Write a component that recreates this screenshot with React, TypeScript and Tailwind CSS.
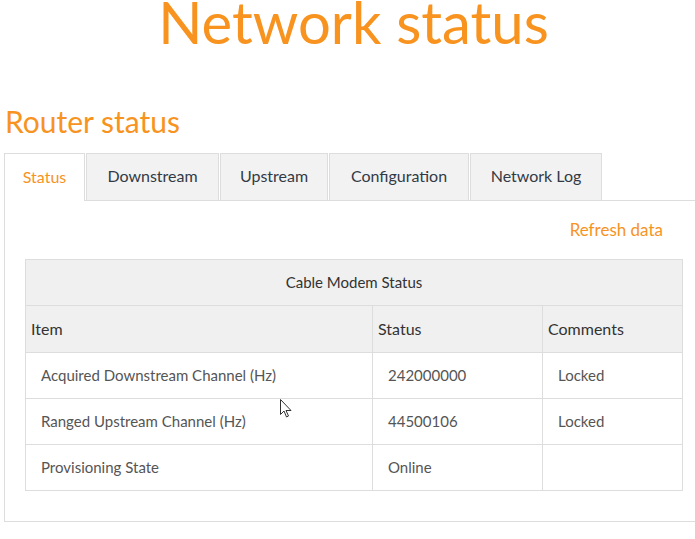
const tabs = [
  { label: "Status", w: "w-[81px]" },
  { label: "Downstream", w: "w-[133px]" },
  { label: "Upstream", w: "w-[108px]" },
  { label: "Configuration", w: "w-[140px]" },
  { label: "Network Log", w: "w-[132px]" },
];

const rows = [
  { item: "Acquired Downstream Channel (Hz)", status: "242000000", comment: "Locked" },
  { item: "Ranged Upstream Channel (Hz)", status: "44500106", comment: "Locked" },
  { item: "Provisioning State", status: "Online", comment: "" },
];

export default function App() {
  return (
    <div className="relative h-[539px] w-[695px] overflow-hidden bg-white font-['Lato',sans-serif]">
      <h1 className="pl-3 text-center text-[58px] leading-[0.75] text-[#f7931e]">Network status</h1>

      <div className="px-1">
        <h2 className="mt-[59px] pl-px text-[30px] leading-[1.2] text-[#f7931e]">Router status</h2>

        <div className="mt-[14px] w-[700px]">
          <ul className="flex">
            {tabs.map((tab, i) => (
              <li
                key={tab.label}
                className={
                  i === 0
                    ? `-mb-px mr-px flex h-[48px] ${tab.w} items-center justify-center border border-b-0 border-[#dddddd] bg-white pb-px text-[16px] text-[#f7931e]`
                    : `mr-px flex h-[47px] ${tab.w} items-center justify-center border border-b-0 border-[#dddddd] bg-[#f2f2f2] pb-px text-[16px] text-[#333a45]`
                }
              >
                {tab.label}
              </li>
            ))}
          </ul>

          <div className="border border-[#dddddd] px-5 pb-[30px]">
            <div className="flex h-[58px] items-center justify-end pr-5">
              <a href="#" className="text-[17px] text-[#f7931e]">
                Refresh data
              </a>
            </div>

            <table className="w-full border-collapse text-[15px]">
              <thead>
                <tr className="h-[46px] bg-[#f0f0f0]">
                  <th colSpan={3} className="border border-[#dddddd] font-normal text-[#333333]">
                    Cable Modem Status
                  </th>
                </tr>
                <tr className="h-[47px] bg-[#f0f0f0] text-left text-[16px]">
                  <th className="w-[347px] border border-[#dddddd] px-[5px] font-normal text-[#333333]">Item</th>
                  <th className="w-[170px] border border-[#dddddd] px-[5px] font-normal text-[#333333]">Status</th>
                  <th className="border border-[#dddddd] px-[5px] font-normal text-[#333333]">Comments</th>
                </tr>
              </thead>
              <tbody>
                {rows.map((r) => (
                  <tr key={r.item} className="h-[46px] text-[#555555]">
                    <td className="border border-[#dddddd] px-[15px]">{r.item}</td>
                    <td className="border border-[#dddddd] px-[15px]">{r.status}</td>
                    <td className="border border-[#dddddd] px-[15px]">{r.comment}</td>
                  </tr>
                ))}
              </tbody>
            </table>
          </div>
        </div>
      </div>

      <svg className="absolute left-[280px] top-[399px]" width="13" height="20" viewBox="0 0 13 20">
        <path d="M0.5 0.5 L0.5 15.5 L4 12 L6.5 18 L8.5 17 L6 11.5 L11 11.5 Z" fill="white" stroke="#333" strokeWidth="1" />
      </svg>
    </div>
  );
}
